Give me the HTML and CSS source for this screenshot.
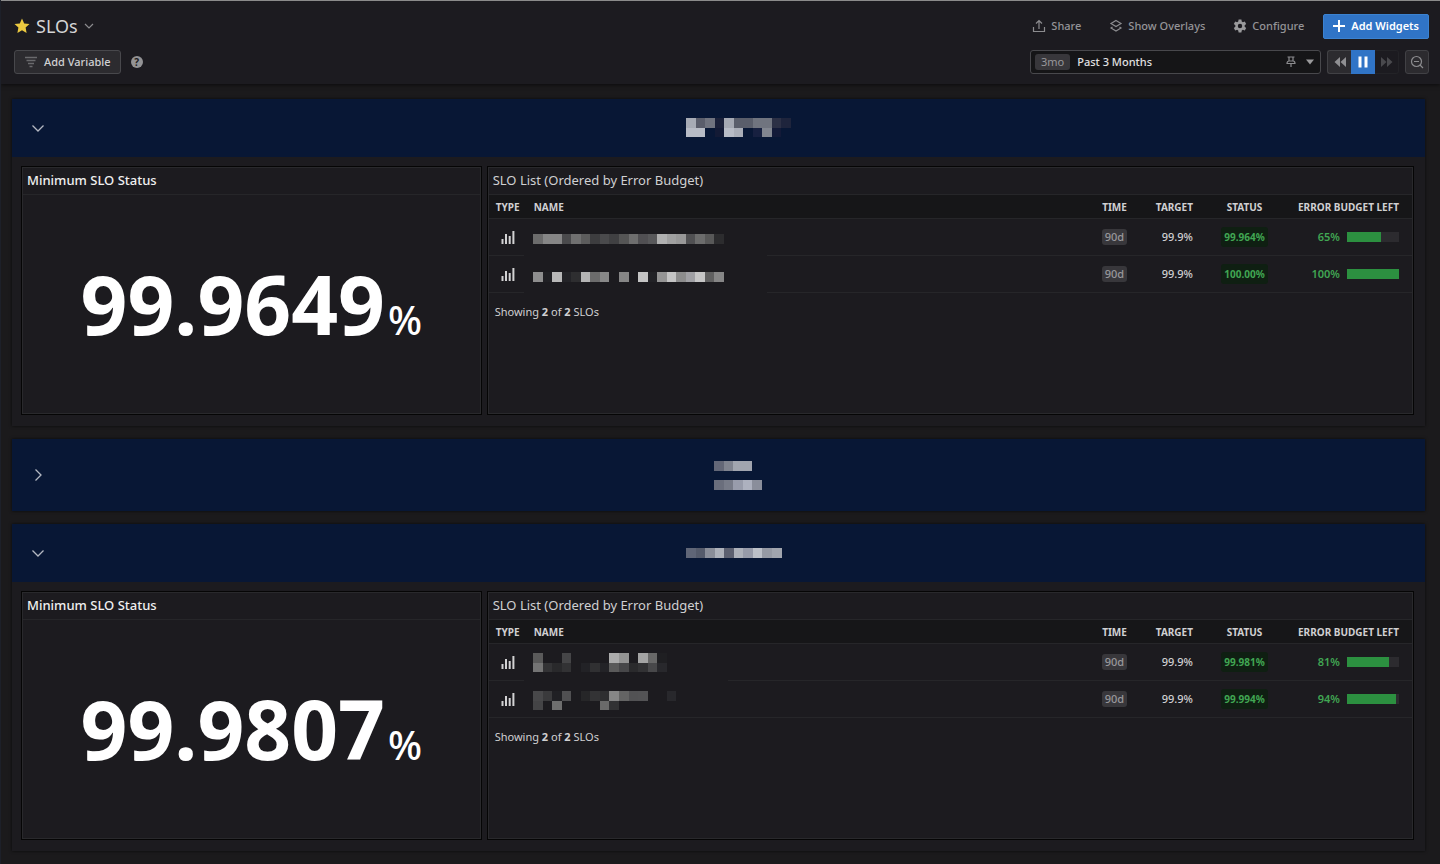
FILE: index.html
```
<!DOCTYPE html>
<html lang="en">
<head>
    <meta charset="utf-8">
    <title>SLOs</title>
    <link rel="stylesheet" href="styles.css">
</head>
<body>
    <header class="topbar">
        <div class="topbar-row">
            <div class="title">
                <svg class="star" width="16" height="16" viewBox="0 0 16 16"><path d="M8 .6l2.200 4.800 5.300.6-3.900 3.600 1 5.300L8 12.300l-4.600 2.600 1-5.300L.5 6l5.300-.6z"/></svg>
                <h1>SLOs</h1>
                <svg class="line-icon" width="10" height="10" viewBox="0 0 10 10"><path d="M1 3l4 4 4-4"/></svg>
            </div>
            <div class="actions">
                <button class="action">
                    <svg class="line-icon" width="14" height="14" viewBox="0 0 14 14"><path d="M1.500 8v4.500h11V8M7 10V2M4 4.500L7 1.500l3 3"/></svg>
                    Share
                </button>
                <button class="action">
                    <svg class="line-icon" width="14" height="14" viewBox="0 0 14 14"><path d="M7 1.500l5 3-5 3-5-3zM3.500 7.900L2 9l5 3 5-3-1.500-1.100"/></svg>
                    Show Overlays
                </button>
                <button class="action">
                    <svg class="gear" width="14" height="14" viewBox="1 .5 12 12"><path fill-rule="evenodd" d="M5.800 1h2.400l.3 1.700 1 .5 1.600-.6 1.200 2.100-1.300 1.100v1.400l1.300 1.100-1.200 2.100-1.600-.6-1 .5-.3 1.700H5.800l-.3-1.700-1-.5-1.600.6-1.200-2.100L3 7.200V5.800L1.700 4.700l1.200-2.100 1.600.6 1-.5zM7 4.600a1.900 1.900 0 1 0 0 3.800 1.900 1.900 0 0 0 0-3.800z"/></svg>
                    Configure
                </button>
                <button class="action primary">
                    <svg width="12" height="12" viewBox="0 0 12 12"><path d="M6 0v12M0 6h12"/></svg>
                    Add Widgets
                </button>
            </div>
        </div>
        <div class="topbar-row">
            <div class="variables">
                <button class="add-variable">
                    <svg width="12" height="12" viewBox="0 0 12 12"><path d="M0 1.500h12M1.500 4.500h9M3 7.500h6M4.500 10.500h3"/></svg>
                    Add Variable
                </button>
                <button class="help" aria-label="Help">?</button>
            </div>
            <div class="time-controls">
                <div class="time-picker">
                    <label class="badge" for="range">3mo</label>
                    <select id="range">
                        <option>Past 3 Months</option>
                    </select>
                    <svg class="line-icon pin" width="10" height="12" viewBox="0 0 10 12"><path d="M1.500 1h7M3 1v4M7 1v4M1 7.500C1 6 2 5 3 5h4c1 0 2 1 2 2.500zM5 7.500V11"/></svg>
                    <svg class="caret" width="8" height="6" viewBox="0 0 8 6"><path d="M0 .5h8L4 5.500z"/></svg>
                </div>
                <div class="playback">
                    <button aria-label="Back"><svg width="12" height="10" viewBox="0 0 12 10"><path d="M6 0v10L.5 5zM12 0v10L6.500 5z"/></svg></button>
                    <button class="active" aria-label="Pause"><svg width="12" height="12" viewBox="0 0 12 12"><path d="M1.500 .5h3v11h-3zM7.500 .5h3v11h-3z"/></svg></button>
                    <button aria-label="Forward" disabled><svg width="12" height="10" viewBox="0 0 12 10"><path d="M0 0v10L5.500 5zM6 0v10L11.500 5z"/></svg></button>
                </div>
                <button class="zoom-out" aria-label="Zoom out"><svg class="line-icon" width="14" height="14" viewBox="0 0 14 14"><circle cx="6.500" cy="6.500" r="5"/><path d="M4 6.500h5M10 10l3 3"/></svg></button>
            </div>
        </div>
    </header>

    <main class="board">
        <section class="group">
            <div class="group-header">
                <button class="toggle" aria-label="Collapse"><svg width="14" height="14" viewBox="0 0 14 14"><path d="M1.500 4.500L7 10l5.500-5.500"/></svg></button>
                <svg class="mosaic" width="145" height="20" aria-hidden="true">
                    <g transform="translate(40 0) scale(9.5 9.7)">
                        <rect x="0" width="1" height="1" fill="#a7abb5"/><rect x="1" width="1" height="1" fill="#5a5d6b"/><rect x="2" width="1" height="1" fill="#70737f"/><rect x="3" width="1" height="1" fill="#1a2039"/>
                        <rect x="4" width="1" height="1" fill="#a5a9b3"/><rect x="5" width="2" height="1" fill="#5a5e6b"/><rect x="7" width="2" height="1" fill="#70747f"/><rect x="9" width="1" height="1" fill="#2c3045"/><rect x="10" width="1" height="1" fill="#1e243c"/>
                        <rect x="0" y="1" width="2" height="1" fill="#b8bcc6"/><rect x="3" y="1" width="1" height="1" fill="#131a35"/><rect x="4" y="1" width="1" height="1" fill="#b8bcc6"/><rect x="5" y="1" width="1" height="1" fill="#aaaeb8"/>
                        <rect x="7" y="1" width="1" height="1" fill="#172040"/><rect x="8" y="1" width="1" height="1" fill="#828690"/><rect x="9" y="1" width="1" height="1" fill="#131a38"/>
                    </g>
                </svg>
            </div>
            <div class="widgets">
                <article class="widget">
                    <h2 class="strong">Minimum SLO Status</h2>
                    <div class="big-value">99.9649<span>%</span></div>
                </article>
                <article class="widget">
                    <h2>SLO List (Ordered by Error Budget)</h2>
                    <table>
                        <thead>
                            <tr>
                                <th class="type">Type</th>
                                <th class="name">Name</th>
                                <th class="time">Time</th>
                                <th class="target">Target</th>
                                <th class="status">Status</th>
                                <th class="budget">Error Budget Left</th>
                            </tr>
                        </thead>
                        <tbody>
                            <tr>
                                <td class="type"><svg class="bars" width="14" height="14" viewBox="0 0 14 14"><path d="M1.500 9v5M5 4v10M8.700 6v8M12.400 1v13"/></svg></td>
                                <td class="name">
                                    <svg class="mosaic cover" width="243" height="37" aria-hidden="true">
                                        <g transform="translate(9 15) scale(9.550 10)">
                                            <rect x="0" width="1" height="1" fill="#6c6c6c"/><rect x="1" width="2" height="1" fill="#868686"/><rect x="3" width="1" height="1" fill="#4a4a4c"/><rect x="4" width="1" height="1" fill="#707070"/><rect x="5" width="1" height="1" fill="#5c5c5c"/>
                                            <rect x="6" width="1" height="1" fill="#3d3d3f"/><rect x="7" width="1" height="1" fill="#4a4a4c"/><rect x="8" width="1" height="1" fill="#404042"/><rect x="9" width="1" height="1" fill="#555"/><rect x="10" width="1" height="1" fill="#6e6e6e"/>
                                            <rect x="11" width="1" height="1" fill="#504f52"/><rect x="12" width="1" height="1" fill="#58585a"/><rect x="13" width="1" height="1" fill="#b0b0b0"/><rect x="14" width="1" height="1" fill="#a0a0a0"/><rect x="15" width="1" height="1" fill="#989898"/>
                                            <rect x="16" width="1" height="1" fill="#505052"/><rect x="17" width="1" height="1" fill="#6c6c6c"/><rect x="18" width="1" height="1" fill="#585858"/><rect x="19" width="1" height="1" fill="#2c2c2e"/>
                                        </g>
                                    </svg>
                                </td>
                                <td class="time"><span class="badge">90d</span></td>
                                <td class="target">99.9%</td>
                                <td class="status"><span class="pill">99.964%</span></td>
                                <td class="budget"><div class="budget-cell">65%<span class="meter"><span class="fill" style="width: 65%"></span></span></div></td>
                            </tr>
                            <tr>
                                <td class="type"><svg class="bars" width="14" height="14" viewBox="0 0 14 14"><path d="M1.500 9v5M5 4v10M8.700 6v8M12.400 1v13"/></svg></td>
                                <td class="name">
                                    <svg class="mosaic cover" width="243" height="37" aria-hidden="true">
                                        <g transform="translate(9 16) scale(9.550 10)">
                                            <rect x="0" width="1" height="1" fill="#8e8e8e"/><rect x="1" width="1" height="1" fill="#202024"/><rect x="2" width="1" height="1" fill="#b8b8b8"/><rect x="3" width="1" height="1" fill="#232327"/><rect x="4" width="1" height="1" fill="#2e2e30"/>
                                            <rect x="5" width="1" height="1" fill="#b4b4b4"/><rect x="6" width="1" height="1" fill="#6c6c6c"/><rect x="7" width="1" height="1" fill="#888"/><rect x="9" width="1" height="1" fill="#868686"/><rect x="11" width="1" height="1" fill="#c4c4c4"/>
                                            <rect x="12" width="1" height="1" fill="#222226"/><rect x="13" width="1" height="1" fill="#949494"/><rect x="14" width="1" height="1" fill="#c4c4c4"/><rect x="15" width="1" height="1" fill="#8c8c8c"/><rect x="16" width="1" height="1" fill="#a0a0a4"/>
                                            <rect x="17" width="1" height="1" fill="#c6c6c6"/><rect x="18" width="1" height="1" fill="#606060"/><rect x="19" width="1" height="1" fill="#868686"/>
                                        </g>
                                    </svg>
                                </td>
                                <td class="time"><span class="badge">90d</span></td>
                                <td class="target">99.9%</td>
                                <td class="status"><span class="pill">100.00%</span></td>
                                <td class="budget"><div class="budget-cell">100%<span class="meter"><span class="fill" style="width: 100%"></span></span></div></td>
                            </tr>
                        </tbody>
                    </table>
                    <p class="summary">Showing <b>2</b> of <b>2</b> SLOs</p>
                </article>
            </div>
        </section>

        <section class="group">
            <div class="group-header tall">
                <button class="toggle" aria-label="Expand"><svg width="14" height="14" viewBox="0 0 14 14"><path d="M4.500 1.500L10 7l-5.500 5.500"/></svg></button>
                <svg class="mosaic" width="87" height="29" aria-hidden="true">
                    <g transform="translate(39 0) scale(9.550 9.700)">
                        <rect x="0" width="1" height="1" fill="#636777"/><rect x="1" width="1" height="1" fill="#7f838f"/><rect x="2" width="2" height="1" fill="#a1a5af"/>
                        <rect x="0" y="2" width="1" height="1" fill="#6a6e7c"/><rect x="1" y="2" width="1" height="1" fill="#777b88"/><rect x="2" y="2" width="1" height="1" fill="#989cab"/><rect x="3" y="2" width="1" height="1" fill="#adb1bf"/><rect x="4" y="2" width="1" height="1" fill="#8a8e9b"/>
                    </g>
                </svg>
            </div>
        </section>

        <section class="group">
            <div class="group-header">
                <button class="toggle" aria-label="Collapse"><svg width="14" height="14" viewBox="0 0 14 14"><path d="M1.500 4.500L7 10l5.500-5.500"/></svg></button>
                <svg class="mosaic" width="126" height="10" aria-hidden="true">
                    <g transform="translate(30 0) scale(9.550 10)">
                        <rect x="0" width="1" height="1" fill="#606677"/><rect x="1" width="1" height="1" fill="#555b6b"/><rect x="2" width="1" height="1" fill="#8a8e99"/><rect x="3" width="1" height="1" fill="#adb1ba"/><rect x="4" width="1" height="1" fill="#5c6070"/>
                        <rect x="5" width="1" height="1" fill="#adb1ba"/><rect x="6" width="1" height="1" fill="#979ba9"/><rect x="7" width="1" height="1" fill="#bcc0c8"/><rect x="8" width="1" height="1" fill="#969aa4"/><rect x="9" width="1" height="1" fill="#a1a5ae"/>
                    </g>
                </svg>
            </div>
            <div class="widgets">
                <article class="widget">
                    <h2 class="strong">Minimum SLO Status</h2>
                    <div class="big-value">99.9807<span>%</span></div>
                </article>
                <article class="widget">
                    <h2>SLO List (Ordered by Error Budget)</h2>
                    <table>
                        <thead>
                            <tr>
                                <th class="type">Type</th>
                                <th class="name">Name</th>
                                <th class="time">Time</th>
                                <th class="target">Target</th>
                                <th class="status">Status</th>
                                <th class="budget">Error Budget Left</th>
                            </tr>
                        </thead>
                        <tbody>
                            <tr>
                                <td class="type"><svg class="bars" width="14" height="14" viewBox="0 0 14 14"><path d="M1.500 9v5M5 4v10M8.700 6v8M12.400 1v13"/></svg></td>
                                <td class="name">
                                    <svg class="mosaic cover" width="204" height="37" aria-hidden="true">
                                        <g transform="translate(9 9) scale(9.550 9.500)">
                                            <rect x="0" width="1" height="1" fill="#5a5a5a"/><rect x="3" width="1" height="1" fill="#454547"/><rect x="8" width="1" height="1" fill="#acacac"/><rect x="9" width="1" height="1" fill="#949494"/><rect x="11" width="1" height="1" fill="#a4a4a4"/><rect x="12" width="1" height="1" fill="#686868"/><rect x="13" width="1" height="1" fill="#1f1f22"/>
                                            <rect x="0" y="1" width="1" height="1" fill="#747474"/><rect x="1" y="1" width="1" height="1" fill="#333335"/><rect x="2" y="1" width="1" height="1" fill="#29292b"/><rect x="3" y="1" width="1" height="1" fill="#323234"/><rect x="5" y="1" width="1" height="1" fill="#222226"/><rect x="6" y="1" width="1" height="1" fill="#303032"/>
                                            <rect x="7" y="1" width="1" height="1" fill="#232327"/><rect x="8" y="1" width="1" height="1" fill="#5a5a5a"/><rect x="9" y="1" width="1" height="1" fill="#474749"/><rect x="10" y="1" width="1" height="1" fill="#2a2a2c"/><rect x="11" y="1" width="1" height="1" fill="#323234"/><rect x="12" y="1" width="1" height="1" fill="#48484a"/><rect x="13" y="1" width="1" height="1" fill="#28282c"/>
                                        </g>
                                    </svg>
                                </td>
                                <td class="time"><span class="badge">90d</span></td>
                                <td class="target">99.9%</td>
                                <td class="status"><span class="pill">99.981%</span></td>
                                <td class="budget"><div class="budget-cell">81%<span class="meter"><span class="fill" style="width: 81%"></span></span></div></td>
                            </tr>
                            <tr>
                                <td class="type"><svg class="bars" width="14" height="14" viewBox="0 0 14 14"><path d="M1.500 9v5M5 4v10M8.700 6v8M12.400 1v13"/></svg></td>
                                <td class="name">
                                    <svg class="mosaic" width="204" height="37" aria-hidden="true">
                                        <g transform="translate(9 10) scale(9.550 9.500)">
                                            <rect x="0" width="1" height="1" fill="#48484a"/><rect x="1" width="1" height="1" fill="#3a3a3c"/><rect x="2" width="1" height="1" fill="#202024"/><rect x="3" width="1" height="1" fill="#505052"/><rect x="5" width="1" height="1" fill="#262628"/><rect x="6" width="1" height="1" fill="#333335"/><rect x="7" width="1" height="1" fill="#2e2e30"/>
                                            <rect x="8" width="1" height="1" fill="#868686"/><rect x="9" width="1" height="1" fill="#646464"/><rect x="10" width="1" height="1" fill="#525254"/><rect x="11" width="1" height="1" fill="#535355"/><rect x="14" width="1" height="1" fill="#28282c"/>
                                            <rect x="0" y="1" width="1" height="1" fill="#444446"/><rect x="2" y="1" width="1" height="1" fill="#6e6e6e"/><rect x="7" y="1" width="1" height="1" fill="#6a6a6a"/><rect x="8" y="1" width="1" height="1" fill="#323234"/>
                                        </g>
                                    </svg>
                                </td>
                                <td class="time"><span class="badge">90d</span></td>
                                <td class="target">99.9%</td>
                                <td class="status"><span class="pill">99.994%</span></td>
                                <td class="budget"><div class="budget-cell">94%<span class="meter"><span class="fill" style="width: 94%"></span></span></div></td>
                            </tr>
                        </tbody>
                    </table>
                    <p class="summary">Showing <b>2</b> of <b>2</b> SLOs</p>
                </article>
            </div>
        </section>
    </main>
</body>
</html>
```
FILE: styles.css
```
* {
    box-sizing: border-box;
}

body {
    margin: 0;
    background: #1b1a1c;
    color: #d0d0d2;
    font-family: "Noto Sans", sans-serif;
    font-size: 11px;
    line-height: 16px;
    border-left: 1px solid #1d2029;
}

h1, h2, p {
    margin: 0;
}

button, select {
    font: inherit;
    color: inherit;
    margin: 0;
    padding: 0;
    border: 0;
    background: none;
}

svg {
    display: block;
    flex: none;
}

.line-icon {
    fill: none;
    stroke: #8c8c8f;
    stroke-width: 1.2;
}

/* top bar */
.topbar {
    display: flex;
    flex-direction: column;
    gap: 12px;
    padding: 13px 11px 10px 13px;
    background: #1c1b20;
    border-top: 1px solid #8b8b8b;
    box-shadow: 0 1px 4px rgba(0, 0, 0, .6);
}

.topbar-row {
    display: flex;
    justify-content: space-between;
    align-items: center;
    height: 24px;
}

.title, .actions, .variables, .time-controls {
    display: flex;
    align-items: center;
}

.title {
    gap: 6px;
}

.title h1 {
    font-size: 18px;
    line-height: 24px;
    font-weight: 400;
    color: #d4d4d5;
}

.star {
    fill: #ebc940;
}

.actions {
    gap: 28px;
}

.action {
    display: flex;
    align-items: center;
    gap: 5px;
    font-weight: 500;
    color: #949497;
}

.gear {
    fill: #9a9a9c;
}

.primary {
    gap: 6px;
    height: 25px;
    margin-left: -9px;
    padding: 0 9px;
    border: 1px solid #3b82d0;
    border-radius: 2px;
    background: #3074c6;
    color: #fff;
    font-weight: 600;
}

.primary svg {
    stroke: #fff;
    stroke-width: 2;
}

.variables {
    gap: 10px;
}

.add-variable {
    display: flex;
    align-items: center;
    gap: 7px;
    height: 24px;
    padding: 0 9px 0 10px;
    border: 1px solid #48484c;
    border-radius: 3px;
    background: #2c2b2f;
    font-weight: 500;
}

.add-variable svg {
    stroke: #6a6a6d;
    stroke-width: 1.5;
}

.help {
    width: 12px;
    height: 12px;
    border-radius: 50%;
    background: #939395;
    color: #1c1b20;
    font-size: 10px;
    line-height: 12px;
    font-weight: 700;
}

.time-controls {
    gap: 6px;
}

.time-picker {
    display: flex;
    align-items: center;
    width: 291px;
    height: 24px;
    padding: 0 6px 0 4px;
    border: 1px solid #48484c;
    border-radius: 3px;
    background: #151517;
}

.time-picker .badge {
    padding: 0 6px;
}

.time-picker select {
    flex: 1;
    height: 20px;
    margin-left: 7px;
    appearance: none;
    color: #e0e0e1;
    font-weight: 500;
}

.pin {
    margin-right: 10px;
}

.caret {
    fill: #9a9a9c;
}

.badge {
    display: inline-block;
    padding: 0 3px;
    border-radius: 3px;
    background: #38373b;
    color: #98989b;
    font-size: 11px;
    line-height: 16px;
}

.playback {
    display: flex;
}

.playback button, .zoom-out {
    display: flex;
    align-items: center;
    justify-content: center;
    width: 24px;
    height: 24px;
    border: 1px solid #414145;
    border-radius: 3px;
    background: #2c2b2f;
    fill: #8f8f92;
}

.playback button:first-child {
    border-radius: 3px 0 0 3px;
    border-right: 0;
}

.playback .active {
    border: 0;
    border-radius: 0;
    background: #3074c6;
    fill: #fff;
}

.playback button:disabled {
    border-color: #232327;
    border-left: 0;
    border-radius: 0 3px 3px 0;
    background: #1c1b20;
    fill: #49494d;
}

/* groups */
.board {
    display: flex;
    flex-direction: column;
    gap: 13px;
    padding: 15px 15px 13px 11px;
}

.group {
    background: #1c1b1f;
    box-shadow: 0 0 3px rgba(0, 0, 0, .7);
}

.group-header {
    display: flex;
    align-items: center;
    justify-content: center;
    position: relative;
    height: 58px;
    background: #081735;
}

.group-header.tall {
    height: 72px;
}

/* the chevron sits over the bar so the name stays centred */
.toggle {
    position: absolute;
    left: 19px;
}

.toggle svg {
    fill: none;
    stroke: #b4b8c2;
    stroke-width: 1.3;
}

.widgets {
    display: grid;
    grid-template-columns: 461fr 928fr;
    gap: 5px;
    padding: 9px 11px 11px 9px;
}

.widget {
    display: flex;
    flex-direction: column;
    min-height: 249px;
    border: 1px solid #050505;
    box-shadow: inset 0 0 0 1px #29292c;
    padding: 1px;
    background: #1c1b1f;
}

.widget h2 {
    height: 27px;
    padding: 0 4px;
    border-bottom: 1px solid #262629;
    font-size: 13px;
    line-height: 25px;
    font-weight: 400;
}

.widget h2.strong {
    font-weight: 500;
    color: #f0f0f0;
}

.big-value {
    display: flex;
    flex: 1;
    align-items: baseline;
    justify-content: center;
    gap: 3px;
    padding-top: 50px;
    color: #fff;
    font-size: 82px;
    line-height: 116px;
    font-weight: 700;
}

.big-value span {
    font-size: 40px;
    line-height: 48px;
    font-weight: 500;
}

table {
    width: 100%;
    border-spacing: 0;
    table-layout: fixed;
}

tr {
    box-shadow: inset 0 -1px #262629;
}

th, td {
    padding: 0;
    text-align: left;
}

th {
    height: 24px;
    background: #161618;
    border-bottom: 1px solid #262629;
    font-size: 10px;
    line-height: 14px;
    font-weight: 700;
    text-transform: uppercase;
    white-space: nowrap;
}

td {
    height: 37px;
    padding-bottom: 2px;
    font-weight: 500;
}

td.name {
    padding-bottom: 0;
}

.type {
    width: 35px;
    padding-left: 7px;
}

td.type {
    padding-left: 12px;
}

th.name {
    padding-left: 10px;
}

.time {
    width: 41px;
    text-align: center;
}

.target {
    width: 58px;
    text-align: right;
}

.status {
    width: 103px;
    text-align: center;
}

.budget {
    width: 116px;
    padding-right: 13px;
    text-align: right;
}

.bars {
    stroke: #d2d2d3;
    stroke-width: 2;
}

.mosaic {
    shape-rendering: crispEdges;
}

.cover {
    background: #1c1b1f;
}

.pill {
    display: inline-block;
    padding: 0 3px;
    border-radius: 3px;
    background: #0f1f12;
    color: #41a653;
    font-size: 10px;
    line-height: 20px;
    font-weight: 700;
}

.budget-cell {
    display: flex;
    align-items: center;
    justify-content: flex-end;
    gap: 7px;
    color: #41a653;
    font-weight: 600;
}

.meter {
    width: 52px;
    height: 10px;
    background: #2c2b2f;
}

.fill {
    display: block;
    height: 10px;
    background: #2c9040;
}

.summary {
    padding: 11px 6px;
}
```
